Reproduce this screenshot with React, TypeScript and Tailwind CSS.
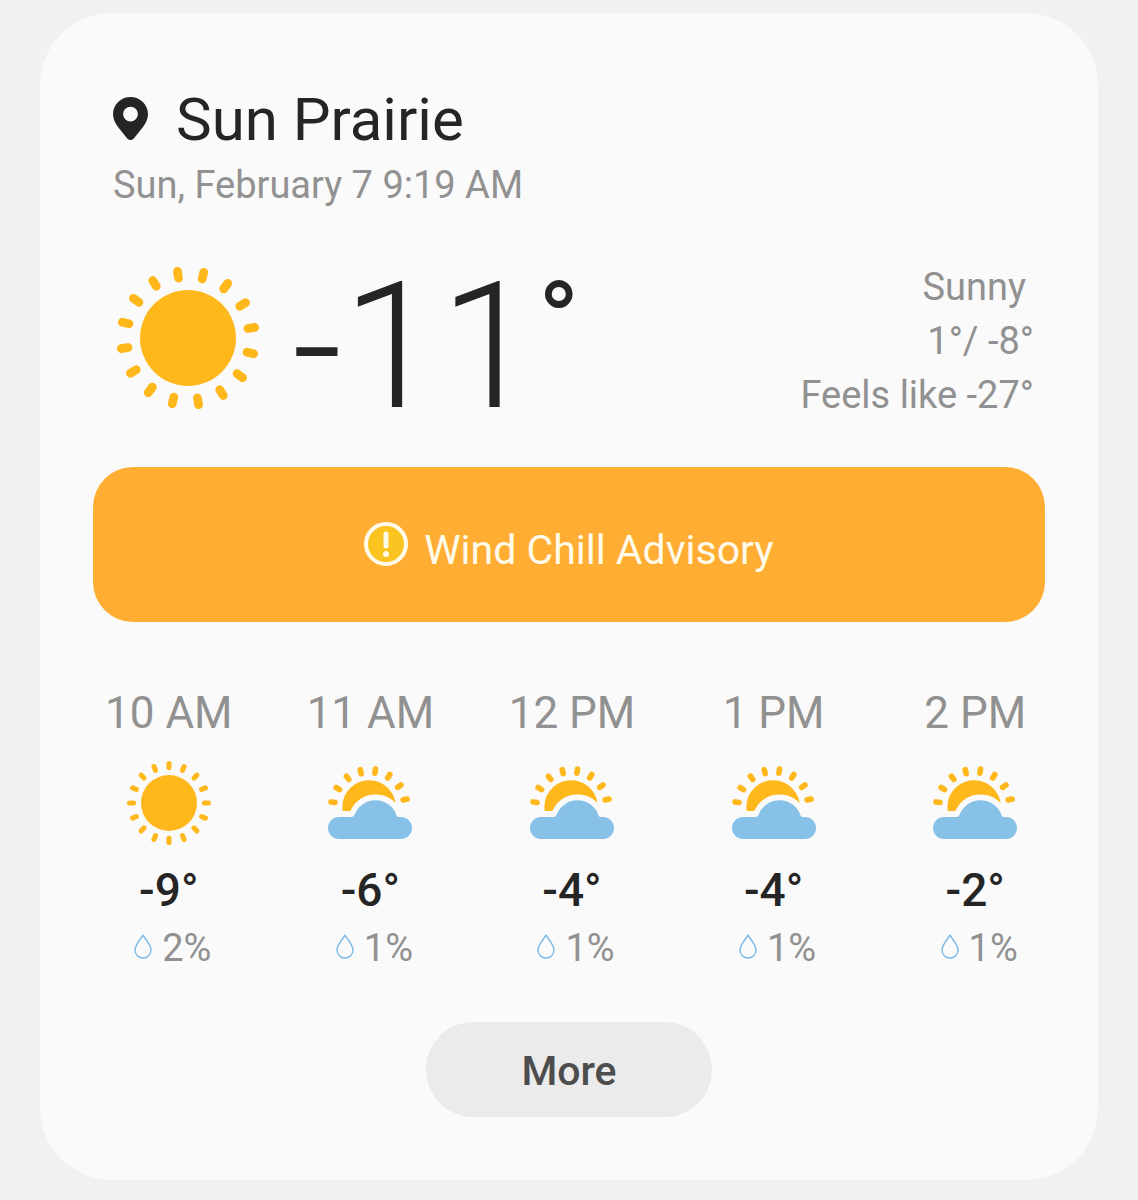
interface HourForecast {
  time: string;
  condition: 'sunny' | 'partly-cloudy';
  temp: number;
  precipitation: number;
}

const hours: HourForecast[] = [
  { time: '10 AM', condition: 'sunny', temp: -9, precipitation: 2 },
  { time: '11 AM', condition: 'partly-cloudy', temp: -6, precipitation: 1 },
  { time: '12 PM', condition: 'partly-cloudy', temp: -4, precipitation: 1 },
  { time: '1 PM', condition: 'partly-cloudy', temp: -4, precipitation: 1 },
  { time: '2 PM', condition: 'partly-cloudy', temp: -2, precipitation: 1 },
];

function PinIcon({ className }: { className?: string }) {
  return (
    <svg viewBox="0 0 35 43" className={className} aria-hidden="true">
      <path
        fill="currentColor"
        fillRule="evenodd"
        d="M17.5 0C7.8 0 0 7.6 0 17.1c0 5 2.2 9.2 5 13l9 11.1c2 2.4 5 2.4 7 0l9-11.1c2.8-3.8 5-8 5-13C35 7.6 27.2 0 17.5 0Zm0 9.700a7.400 7.400 0 1 1 0 14.800 7.400 7.400 0 0 1 0-14.800Z"
      />
    </svg>
  );
}

function SunIcon({ className, tilt = 0 }: { className?: string; tilt?: number }) {
  return (
    <svg viewBox="-42 -42 84 84" className={className} aria-hidden="true">
      <circle r="28" fill="#ffb81c" />
      <g stroke="#ffb81c" strokeWidth="5.1" strokeLinecap="round">
        {Array.from({ length: 16 }, (_, i) => (
          <line key={i} y1="-39.4" y2="-35.4" transform={`rotate(${tilt + i * 22.5})`} />
        ))}
      </g>
    </svg>
  );
}

function PartlyCloudyIcon({ className }: { className?: string }) {
  return (
    <svg viewBox="57 33 252 219" className={className} aria-hidden="true">
      <path fill="#ffb81c" d="M101 168A80 80 0 0 1 260 144A83 83 0 0 0 124 168Z" />
      <g stroke="#ffb81c" strokeWidth="17" strokeLinecap="round">
        {Array.from({ length: 8 }, (_, i) => (
          <line
            key={i}
            x1="181"
            x2="181"
            y1="41"
            y2="53"
            transform={`rotate(${-82 + i * 22.8} 181 157)`}
          />
        ))}
      </g>
      <path
        fill="#88c1e8"
        d="M90 186H128Q134 186 136 181A67 67 0 0 1 263 182Q265 186 270 186H276A33 33 0 0 1 276 252H90A33 33 0 0 1 90 186Z"
      />
    </svg>
  );
}

function AlertIcon({ className }: { className?: string }) {
  return (
    <svg viewBox="0 0 44 44" className={className} aria-hidden="true">
      <circle cx="22" cy="22" r="20" fill="#fcc420" stroke="#fffbea" strokeWidth="4" />
      <path d="M22 12v12" stroke="#fffbea" strokeWidth="5" strokeLinecap="round" />
      <circle cx="22" cy="32" r="3" fill="#fffbea" />
    </svg>
  );
}

function DropIcon({ className }: { className?: string }) {
  return (
    <svg viewBox="0 0 18 25" className={className} aria-hidden="true">
      <path
        d="M9 1.2C6.5 5.5 1 10.8 1 16a8 8 0 0 0 16 0C17 10.8 11.5 5.5 9 1.2Z"
        fill="none"
        stroke="#7cb9e6"
        strokeWidth="1.4"
        strokeLinejoin="round"
      />
    </svg>
  );
}

function HourColumn({ hour }: { hour: HourForecast }) {
  return (
    <li className="flex flex-col items-center">
      <span className="text-[44px] leading-14 text-[#919191]">{hour.time}</span>
      <div className="mt-5 flex h-[84px] items-center">
        {hour.condition === 'sunny' ? (
          <SunIcon className="size-[84px]" />
        ) : (
          <PartlyCloudyIcon className="mb-0.5 w-[84px]" />
        )}
      </div>
      <span className="mt-[17px] text-[46px] leading-14 font-medium text-[#252525]">{hour.temp}°</span>
      <div className="mt-1.5 flex items-center gap-2.5 pl-2">
        <DropIcon className="mb-1 w-[18px]" />
        <span className="text-[38px] leading-12 text-[#919191]">{hour.precipitation}%</span>
      </div>
    </li>
  );
}

export default function App() {
  return (
    <div className="min-h-screen bg-[#f1f1f1] px-10 pt-[13px] pb-5 font-['Roboto',sans-serif]">
      <main className="rounded-[72px] bg-[#fafafa] pt-[69px] pb-[63px]">
        <header className="px-[73px]">
          <div className="flex items-center gap-7">
            <PinIcon className="mb-1 w-[35px] text-[#252525]" />
            <h1 className="text-[60px] leading-[76px] text-[#252525]">Sun Prairie</h1>
          </div>
          <p className="text-[38px] leading-[54px] text-[#919191]">Sun, February 7 9:19 AM</p>
        </header>

        <section className="mt-12 flex items-center justify-between pr-16 pl-19">
          <div className="flex items-center gap-8">
            <SunIcon className="mb-1.5 size-36" tilt={-9} />
            <div className="flex items-start pt-3 text-[#252525]">
              <span className="text-[176px] leading-[146px] font-light">-11</span>
              <span className="text-[112px] leading-24">°</span>
            </div>
          </div>
          <div className="text-right text-[38px] leading-[54px] text-[#919191]">
            <p className="pr-2">Sunny</p>
            <p>1°/ -8°</p>
            <p>Feels like -27°</p>
          </div>
        </section>

        <div className="mx-[53px] mt-[45px]">
          <button
            type="button"
            className="flex h-[155px] w-full items-center justify-center gap-4 rounded-[40px] bg-[#ffae33] text-[#fffbea]"
          >
            <AlertIcon className="mb-0.5 size-11" />
            <span className="pt-2.5 text-[41px] leading-12">Wind Chill Advisory</span>
          </button>
        </div>

        <ul className="mt-[63px] mr-[22px] ml-7 grid grid-cols-5">
          {hours.map(hour => (
            <HourColumn key={hour.time} hour={hour} />
          ))}
        </ul>

        <div className="mt-[50px] flex justify-center">
          <button
            type="button"
            className="h-[95px] w-[286px] rounded-full bg-[#ebebeb] pt-1 text-[41px] font-medium text-[#4d4d4d]"
          >
            More
          </button>
        </div>
      </main>
    </div>
  );
}
